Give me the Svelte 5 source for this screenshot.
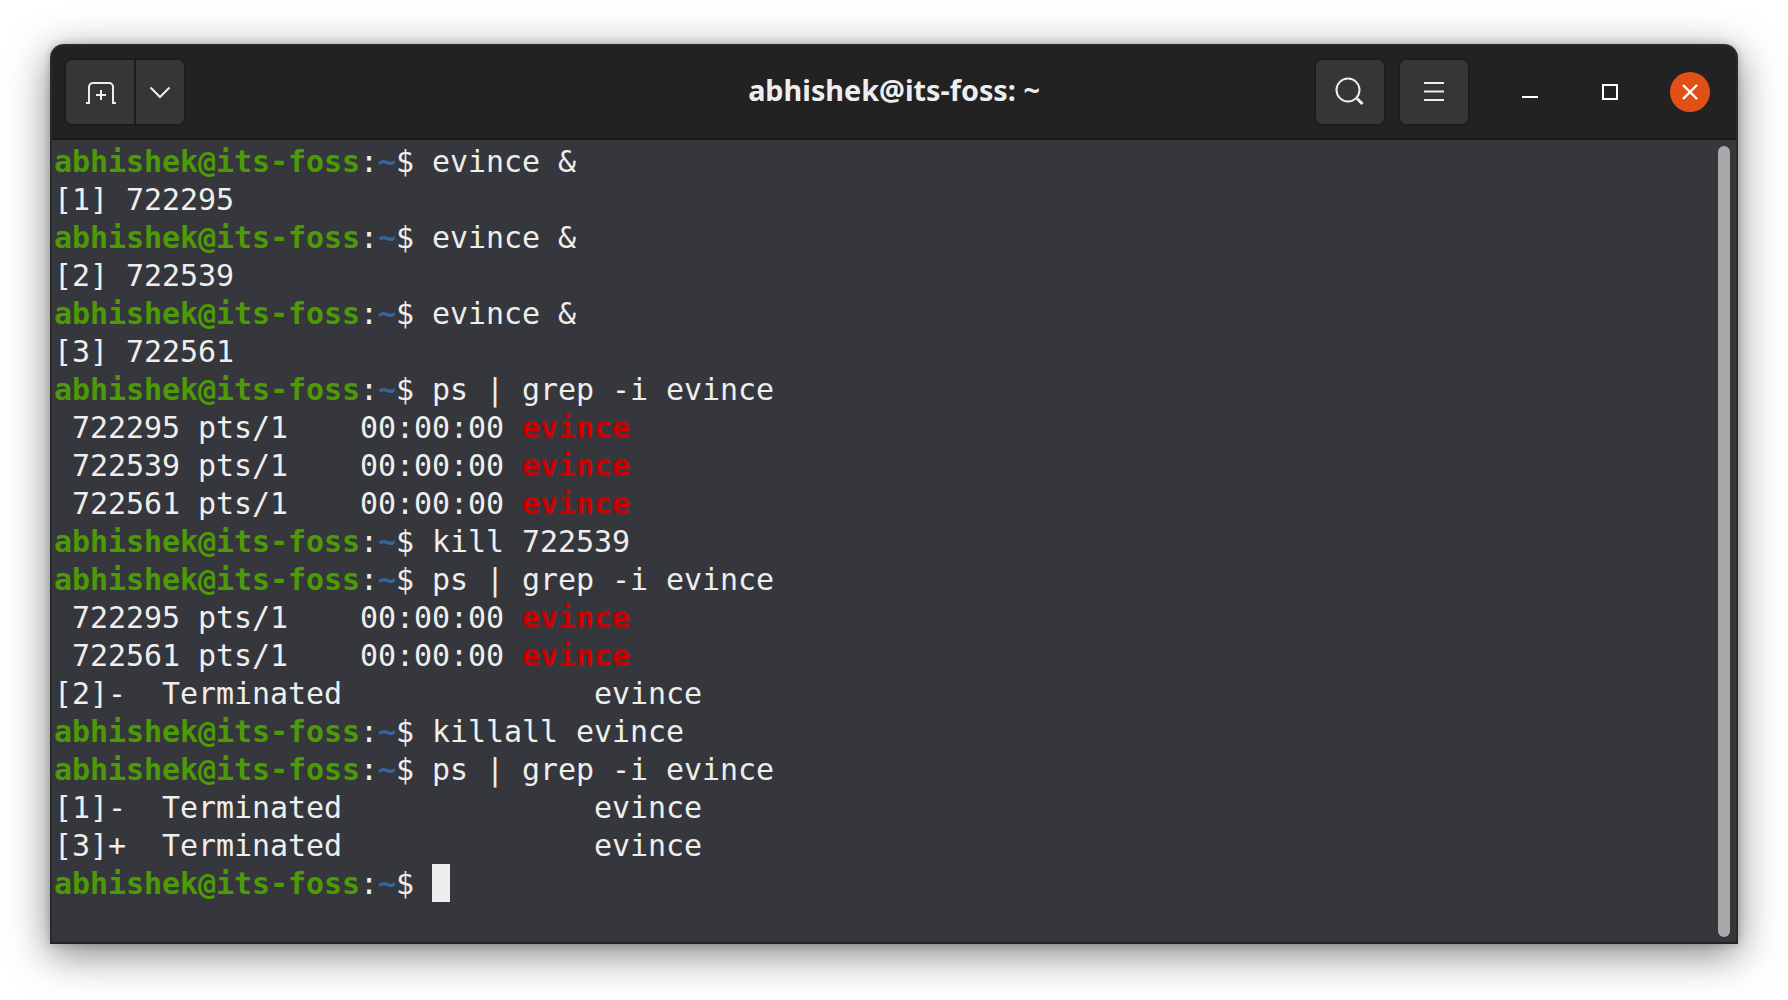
<script>
  // Rows of the terminal; "prompt" rows get the coloured prefix.
  const rows = [
    { prompt: true, text: 'evince &' },
    { text: '[1] 722295' },
    { prompt: true, text: 'evince &' },
    { text: '[2] 722539' },
    { prompt: true, text: 'evince &' },
    { text: '[3] 722561' },
    { prompt: true, text: 'ps | grep -i evince' },
    { text: ' 722295 pts/1    00:00:00 ', match: 'evince' },
    { text: ' 722539 pts/1    00:00:00 ', match: 'evince' },
    { text: ' 722561 pts/1    00:00:00 ', match: 'evince' },
    { prompt: true, text: 'kill 722539' },
    { prompt: true, text: 'ps | grep -i evince' },
    { text: ' 722295 pts/1    00:00:00 ', match: 'evince' },
    { text: ' 722561 pts/1    00:00:00 ', match: 'evince' },
    { text: '[2]-  Terminated              evince' },
    { prompt: true, text: 'killall evince' },
    { prompt: true, text: 'ps | grep -i evince' },
    { text: '[1]-  Terminated              evince' },
    { text: '[3]+  Terminated              evince' },
    { prompt: true, text: '', cursor: true }
  ];
</script>

<div class="page">
  <main class="window">
    <header class="titlebar">
      <div class="left">
        <div class="split">
          <button class="btn tab" aria-label="New tab">
            <svg width="32" height="24" viewBox="0 0 32 24" fill="none" stroke="#eee" stroke-width="2">
              <path d="M2 23h3V7a4 4 0 0 1 4-4h16a4 4 0 0 1 4 4v16h3" />
              <path d="M17 10v10M12 15h10" />
            </svg>
          </button>
          <button class="btn arrow" aria-label="Tab options">
            <svg width="22" height="13" viewBox="0 0 22 13" fill="none" stroke="#eee" stroke-width="2">
              <path d="M1.5 1.5 11 11l9.5-9.5" />
            </svg>
          </button>
        </div>
      </div>
      <h1>abhishek@its-foss: ~</h1>
      <div class="right">
        <button class="btn square" aria-label="Search">
          <svg width="30" height="30" viewBox="0 0 30 30" fill="none" stroke="#eee">
            <circle cx="13" cy="13" r="11.5" stroke-width="2" />
            <path d="M22 21.5l5.5 5.5" stroke-width="3" />
          </svg>
        </button>
        <button class="btn square" aria-label="Menu">
          <svg width="20" height="20" viewBox="0 0 20 20" fill="none" stroke="#eee" stroke-width="2">
            <path d="M0 1h20M0 9.5h20M0 18h20" />
          </svg>
        </button>
        <div class="controls">
          <button class="wm" aria-label="Minimize">
            <svg width="16" height="16" viewBox="0 0 16 16" fill="none" stroke="#fff" stroke-width="2">
              <path d="M0 13h16" />
            </svg>
          </button>
          <button class="wm" aria-label="Maximize">
            <svg width="16" height="16" viewBox="0 0 16 16" fill="none" stroke="#fff" stroke-width="2">
              <rect x="1" y="1" width="14" height="14" />
            </svg>
          </button>
          <button class="wm close" aria-label="Close">
            <svg width="16" height="16" viewBox="0 0 16 16" fill="none" stroke="#fff" stroke-width="2.4">
              <path d="M1 1l14 14M15 1 1 15" />
            </svg>
          </button>
        </div>
      </div>
    </header>

    <section class="terminal">
      <div class="output">
        {#each rows as row}
          <div class="row">{#if row.prompt}<span class="user">abhishek@its-foss</span>:<span class="path">~</span>{'$ '}{/if}{row.text}{#if row.match}<span class="match">{row.match}</span>{/if}{#if row.cursor}<span class="cursor"></span>{/if}</div>
        {/each}
      </div>
      <div class="scrollbar"></div>
    </section>
  </main>
</div>

<style>
  :global(body) {
    background: #fff;
  }

  .page {
    box-sizing: border-box;
    height: 1000px;
    padding: 44px 50px 56px;
    overflow: hidden;
  }

  .window {
    box-sizing: border-box;
    height: 900px;
    display: flex;
    flex-direction: column;
    border: 2px solid #2a2a2a;
    border-bottom-color: #222;
    border-radius: 14px 14px 0 0;
    background: #36373d;
    box-shadow: 0 10px 40px rgba(0, 0, 0, 0.5), 0 0 8px rgba(0, 0, 0, 0.2);
    overflow: hidden;
  }

  .titlebar {
    box-sizing: border-box;
    height: 94px;
    flex: none;
    display: grid;
    grid-template-columns: 1fr auto 1fr;
    align-items: center;
    padding: 0 6px;
    background: #222;
    border-bottom: 2px solid #191919;
  }

  h1 {
    margin: 0;
    padding-bottom: 5px;
    color: #eee;
    font: 700 28.8px "Noto Sans", sans-serif;
  }

  .left,
  .right {
    display: flex;
    align-items: center;
  }

  .left {
    padding-left: 6px;
  }

  .right {
    justify-content: flex-end;
    gap: 12px;
  }

  button {
    padding: 0;
    border: 0;
    background: none;
    display: flex;
    align-items: center;
    justify-content: center;
  }

  .split {
    display: flex;
    border: 2px solid #1c1c1c;
    border-radius: 8px;
    overflow: hidden;
  }

  .btn {
    height: 64px;
    background: #363636;
  }

  .tab {
    width: 70px;
    border-right: 2px solid #1c1c1c;
  }

  .arrow {
    width: 48px;
  }

  .square {
    box-sizing: content-box;
    width: 68px;
    border: 2px solid #1c1c1c;
    border-radius: 8px;
  }

  .controls {
    display: flex;
    margin-left: 8px;
  }

  .wm {
    width: 40px;
    height: 40px;
    margin: 0 20px;
    border-radius: 50%;
  }

  .close {
    background: #e25017;
  }

  .terminal {
    flex: 1;
    display: flex;
    min-height: 0;
  }

  .output {
    flex: 1;
    padding: 2px;
    color: #eeeeec;
    font: 400 30px/40px "DejaVu Sans Mono", monospace;
    letter-spacing: -0.06px;
  }

  .row {
    height: 38px;
    white-space: pre;
  }

  .user {
    color: #4e9a06;
    font-weight: 700;
  }

  .path {
    color: #3465a4;
    font-weight: 700;
  }

  .match {
    color: #cc0000;
    font-weight: 700;
  }

  .cursor {
    display: inline-block;
    width: 18px;
    height: 38px;
    vertical-align: top;
    background: #eee;
  }

  .scrollbar {
    flex: none;
    width: 12px;
    margin: 6px 6px 5px 0;
    border-radius: 6px;
    background: #a9a9a9;
  }
</style>
